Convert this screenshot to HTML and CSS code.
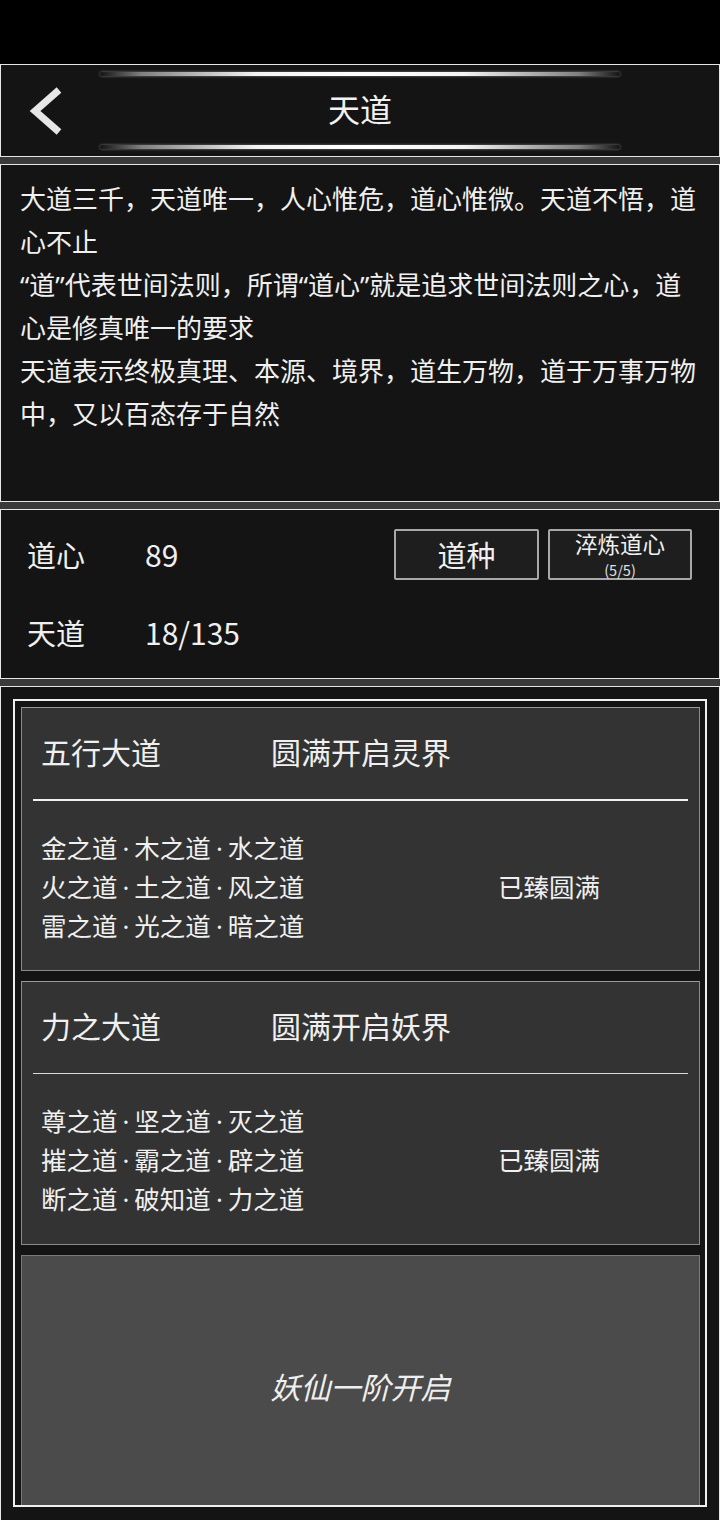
FILE: index.html
```html
<!DOCTYPE html>
<html lang="zh-CN">
<head>
<meta charset="utf-8">
<title>天道</title>
<link rel="stylesheet" href="styles.css">
</head>
<body>
<div class="statusbar"></div>
<div class="page">
  <header class="panel header">
    <div class="glow"></div>
    <div class="title-row">
      <div class="back">
        <svg width="36" height="50" viewBox="0 0 36 50"><polyline points="32,4 8,25 32,46" fill="none" stroke="#e6e6e6" stroke-width="7" stroke-linejoin="miter"/></svg>
      </div>
      <h1 class="title">天道</h1>
      <div></div>
    </div>
    <div class="glow"></div>
  </header>

  <section class="panel desc">
    <p>大道三千，天道唯一，人心惟危，道心惟微。天道不悟，道心不止</p>
    <p>“道”代表世间法则，所谓“道心”就是追求世间法则之心，道心是修真唯一的要求</p>
    <p>天道表示终极真理、本源、境界，道生万物，道于万事万物中，又以百态存于自然</p>
  </section>

  <section class="panel stats">
    <div class="stat-row">
      <span class="stat-label">道心</span>
      <span class="stat-value">89</span>
      <div class="buttons">
        <button class="btn btn-big">道种</button>
        <button class="btn btn-two"><span class="btn-main">淬炼道心</span><span class="btn-sub">(5/5)</span></button>
      </div>
    </div>
    <div class="stat-row">
      <span class="stat-label">天道</span>
      <span class="stat-value">18/135</span>
    </div>
  </section>

  <section class="panel list-panel">
    <div class="frame">
      <div class="card">
        <div class="card-head">
          <span class="card-title">五行大道</span>
          <span class="card-open">圆满开启灵界</span>
        </div>
        <div class="card-sep"></div>
        <div class="card-body">
          <div class="ways">
            <div>金之道<span class="dot">·</span>木之道<span class="dot">·</span>水之道</div>
            <div>火之道<span class="dot">·</span>土之道<span class="dot">·</span>风之道</div>
            <div>雷之道<span class="dot">·</span>光之道<span class="dot">·</span>暗之道</div>
          </div>
          <div class="state">已臻圆满</div>
        </div>
      </div>
      <div class="card">
        <div class="card-head">
          <span class="card-title">力之大道</span>
          <span class="card-open">圆满开启妖界</span>
        </div>
        <div class="card-sep thin"></div>
        <div class="card-body">
          <div class="ways">
            <div>尊之道<span class="dot">·</span>坚之道<span class="dot">·</span>灭之道</div>
            <div>摧之道<span class="dot">·</span>霸之道<span class="dot">·</span>辟之道</div>
            <div>断之道<span class="dot">·</span>破知道<span class="dot">·</span>力之道</div>
          </div>
          <div class="state">已臻圆满</div>
        </div>
      </div>
      <div class="card locked">
        <span class="locked-text">妖仙一阶开启</span>
      </div>
    </div>
  </section>
</div>
</body>
</html>
```
FILE: styles.css
```css
* { box-sizing: border-box; }
html, body {
  margin: 0;
  padding: 0;
  background: #000;
  color: #f0f0f0;
  font-family: "Noto Sans CJK SC", "Noto Sans", sans-serif;
  width: 720px;
  height: 1520px;
  overflow: hidden;
}
.statusbar {
  height: 64px;
  background: #000;
}
.page {
  background: #3a3a3a;
  display: flex;
  flex-direction: column;
  gap: 7px;
  height: 1456px;
}
.panel {
  background: #141414;
  border: 1px solid #e6e6e6;
}

/* header */
.header {
  height: 93px;
  display: flex;
  flex-direction: column;
  align-items: center;
  padding: 7px 0 7px;
}
.glow {
  width: 520px;
  height: 4px;
  border-radius: 2px;
  background: linear-gradient(to right, rgba(255,255,255,0) 0%, rgba(200,200,200,0.6) 8%, #f4f4f4 30%, #ffffff 50%, #f4f4f4 70%, rgba(200,200,200,0.6) 92%, rgba(255,255,255,0) 100%);
  box-shadow: 0 0 3px rgba(255,255,255,0.45);
}
.title-row {
  flex: 1;
  width: 100%;
  display: grid;
  grid-template-columns: 1fr auto 1fr;
  align-items: center;
}
.back {
  padding-left: 26px;
  display: flex;
  align-items: center;
}
.back svg { display: block; }
.title {
  margin: 0 0 5px;
  font-size: 32px;
  font-weight: 400;
  color: #f2f2f2;
  line-height: 1;
}

/* description */
.desc {
  height: 338px;
  padding: 13px 18px 0 19px;
  font-family: "Noto Sans", "Noto Sans CJK SC", sans-serif;
  font-size: 26px;
  line-height: 43px;
}
.desc p { margin: 0; }

/* stats */
.stats {
  height: 170px;
  padding: 5px 27px 0 26px;
}
.stat-row {
  height: 78px;
  display: flex;
  align-items: center;
  font-size: 29px;
}
.stat-label { width: 118px; }
.stat-value { flex: 1; font-size: 30px; }
.buttons {
  display: flex;
  gap: 9px;
  margin-top: 1px;
}
.btn {
  height: 51px;
  width: 145px;
  background: #1e1e1e;
  border: 2px solid #a8a8a8;
  border-radius: 2px;
  color: #f0f0f0;
  font-family: inherit;
  padding: 0;
  display: flex;
  flex-direction: column;
  align-items: center;
  justify-content: center;
}
.btn-big { font-size: 29px; line-height: 1; }
.btn-two {
  width: 144px;
  justify-content: flex-start;
  padding-top: 1px;
}
.btn-main { font-size: 22.5px; line-height: 22px; }
.btn-sub { font-size: 14.5px; line-height: 15px; color: #e0e0e0; margin-top: 8px; }

/* list */
.list-panel {
  flex: 1;
  border-bottom: none;
  padding: 12px 12px 0 12px;
}
.frame {
  border: 2px solid #f0f0f0;
  height: 808px;
  padding: 6px 5px 0 6px;
  display: flex;
  flex-direction: column;
  gap: 10px;
  overflow: hidden;
}
.card {
  background: #333;
  border: 1px solid #8a8a8a;
  border-top-color: #9a9a9a;
  height: 264px;
  flex-shrink: 0;
}
.card-head {
  height: 91px;
  display: flex;
  align-items: center;
  padding: 0 0 6px 19px;
  font-size: 30px;
}
.card-title { width: 230px; }
.card-sep {
  height: 2px;
  background: #f0f0f0;
  margin: 0 11px;
}
.card-sep.thin { height: 1px; background: #d8d8d8; }
.card-body {
  display: flex;
  align-items: center;
  padding: 26px 0 0 19px;
  font-size: 25.5px;
  line-height: 39px;
}
.ways { width: 457px; }
.ways > div { height: 39px; }
.dot {
  font-family: "Noto Sans", "DejaVu Sans", sans-serif;
  margin: 0 5px;
  line-height: 1;
}
.state { font-size: 25.5px; }
.card.locked {
  background: #4b4b4b;
  border-color: #7a7a7a;
  height: 260px;
  display: flex;
  align-items: center;
  justify-content: center;
}
.locked-text {
  font-size: 30px;
  font-style: italic;
  color: #efefef;
  margin-top: 2px;
}
```
